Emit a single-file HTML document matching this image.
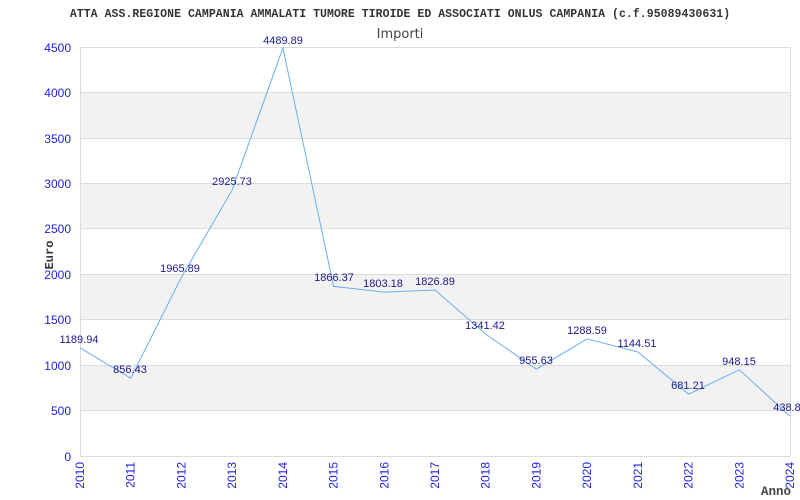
<!DOCTYPE html>
<html><head><style>body{margin:0;background:#fff}</style></head><body>
<svg width="800" height="500" xmlns="http://www.w3.org/2000/svg" style="display:block">
<rect width="800" height="500" fill="#fff"/>
<g fill="#f2f2f2">
<rect x="80" y="92.4" width="710" height="45.4"/>
<rect x="80" y="183.3" width="710" height="45.4"/>
<rect x="80" y="274.2" width="710" height="45.4"/>
<rect x="80" y="365.1" width="710" height="45.4"/>
</g>
<g stroke="#dcdcdc" stroke-width="1">
<line x1="80" y1="47.5" x2="790" y2="47.5"/><line x1="80" y1="92.5" x2="790" y2="92.5"/>
<line x1="80" y1="138.5" x2="790" y2="138.5"/><line x1="80" y1="183.5" x2="790" y2="183.5"/>
<line x1="80" y1="228.5" x2="790" y2="228.5"/><line x1="80" y1="274.5" x2="790" y2="274.5"/>
<line x1="80" y1="319.5" x2="790" y2="319.5"/><line x1="80" y1="365.5" x2="790" y2="365.5"/>
<line x1="80" y1="410.5" x2="790" y2="410.5"/><line x1="80" y1="456.5" x2="790" y2="456.5"/>
<line x1="80.5" y1="47" x2="80.5" y2="456"/><line x1="790.5" y1="47" x2="790.5" y2="456"/>
</g>
<polyline fill="none" stroke="#6aaef0" stroke-width="1" points="80,347.8 130.7,378.2 181.4,277.3 232.1,190.1 282.9,47.9 333.6,286.4 384.3,292.1 435,290 485.7,334.1 536.4,369.1 587.1,338.9 637.9,352 688.6,394.1 739.3,369.8 790,416.1"/>
<g font-family="Liberation Sans, sans-serif" font-size="11" fill="#1a1a8c" text-anchor="middle">
<text x="79" y="343">1189.94</text><text x="130" y="373">856.43</text><text x="180" y="272">1965.89</text>
<text x="232" y="185">2925.73</text><text x="283" y="44">4489.89</text><text x="334" y="281">1866.37</text>
<text x="383" y="287">1803.18</text><text x="435" y="285">1826.89</text><text x="485" y="329">1341.42</text>
<text x="536" y="364">955.63</text><text x="587" y="334">1288.59</text><text x="637" y="347">1144.51</text>
<text x="688" y="389">681.21</text><text x="739" y="365">948.15</text><text x="787" y="411">438.8</text>
</g>
<g font-family="Liberation Sans, sans-serif" font-size="12" fill="#1e1ee6" text-anchor="end">
<text x="71" y="52">4500</text><text x="71" y="97">4000</text><text x="71" y="143">3500</text>
<text x="71" y="188">3000</text><text x="71" y="233">2500</text><text x="71" y="279">2000</text>
<text x="71" y="324">1500</text><text x="71" y="370">1000</text><text x="71" y="415">500</text><text x="71" y="461">0</text>
</g>
<g font-family="Liberation Sans, sans-serif" font-size="12" fill="#1e1ee6" text-anchor="end">
<text transform="translate(84,462) rotate(-90)">2010</text>
<text transform="translate(134.7,462) rotate(-90)">2011</text>
<text transform="translate(185.4,462) rotate(-90)">2012</text>
<text transform="translate(236.1,462) rotate(-90)">2013</text>
<text transform="translate(286.9,462) rotate(-90)">2014</text>
<text transform="translate(337.6,462) rotate(-90)">2015</text>
<text transform="translate(388.3,462) rotate(-90)">2016</text>
<text transform="translate(439,462) rotate(-90)">2017</text>
<text transform="translate(489.7,462) rotate(-90)">2018</text>
<text transform="translate(540.4,462) rotate(-90)">2019</text>
<text transform="translate(591.1,462) rotate(-90)">2020</text>
<text transform="translate(641.9,462) rotate(-90)">2021</text>
<text transform="translate(692.6,462) rotate(-90)">2022</text>
<text transform="translate(743.3,462) rotate(-90)">2023</text>
<text transform="translate(794,462) rotate(-90)">2024</text>
</g>
<text x="400" y="17" text-anchor="middle" font-family="Liberation Mono, monospace" font-size="11.5" font-weight="bold" fill="#333" letter-spacing="0.05">ATTA ASS.REGIONE CAMPANIA AMMALATI TUMORE TIROIDE ED ASSOCIATI ONLUS CAMPANIA (c.f.95089430631)</text>
<text x="400" y="38" text-anchor="middle" font-family="DejaVu Sans, sans-serif" font-size="13" fill="#444">Importi</text>
<text transform="translate(53,255) rotate(-90)" text-anchor="middle" font-family="Liberation Mono, monospace" font-size="12" font-weight="bold" fill="#333">Euro</text>
<text x="761" y="495" font-family="Liberation Mono, monospace" font-size="12.5" font-weight="bold" fill="#444">Anno</text>
</svg>
</body></html>
